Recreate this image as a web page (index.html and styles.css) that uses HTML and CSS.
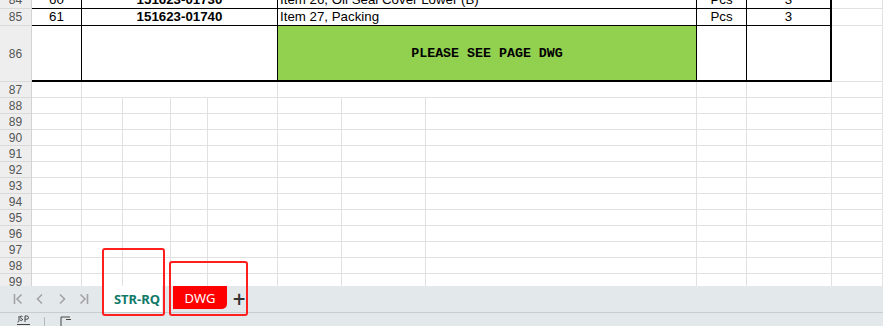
FILE: index.html
```html
<!DOCTYPE html>
<html lang="en">
<head>
    <meta charset="UTF-8">
    <title>STR-RQ</title>
    <link rel="stylesheet" href="styles.css">
</head>
<body>
    <div class="sheet" id="sheet">
        <div class="row tbl first">
            <div class="hd">84</div>
            <div class="c num">60</div>
            <div class="c code">151623-01730</div>
            <div class="c item">Item 26, Oil Seal Cover Lower (B)</div>
            <div class="c mid">Pcs</div>
            <div class="c mid edge">3</div>
            <div class="g"></div>
        </div>
        <div class="row tbl">
            <div class="hd">85</div>
            <div class="c num">61</div>
            <div class="c code">151623-01740</div>
            <div class="c item">Item 27, Packing</div>
            <div class="c mid">Pcs</div>
            <div class="c mid edge">3</div>
            <div class="g"></div>
        </div>
        <div class="row tbl tall">
            <div class="hd">86</div>
            <div class="c num"></div>
            <div class="c code"></div>
            <div class="c note">PLEASE SEE PAGE DWG</div>
            <div class="c mid"></div>
            <div class="c mid edge"></div>
            <div class="g"></div>
        </div>
        <div class="row tbl plain">
            <div class="hd">87</div>
            <div class="g"></div>
            <div class="g"></div>
            <div class="g"></div>
            <div class="g"></div>
            <div class="g"></div>
            <div class="g"></div>
        </div>
    </div>

    <div class="tabbar">
        <div class="nav">
            <span class="navbtn"><svg width="10" height="12" viewBox="0 0 10 12"><path d="M1.5 1v10M8.5 1.5L4 6l4.5 4.5"/></svg></span>
            <span class="navbtn"><svg width="10" height="12" viewBox="0 0 10 12"><path d="M7 1.5L2.5 6 7 10.5"/></svg></span>
            <span class="navbtn"><svg width="10" height="12" viewBox="0 0 10 12"><path d="M3 1.5L7.5 6 3 10.5"/></svg></span>
            <span class="navbtn"><svg width="10" height="12" viewBox="0 0 10 12"><path d="M1.5 1.5L6 6l-4.5 4.5M8.5 1v10"/></svg></span>
        </div>
        <div class="tab active">STR-RQ</div>
        <div class="tab red">DWG</div>
        <div class="add">+</div>
    </div>

    <div class="status">
        <svg class="st-ico" width="16" height="13" viewBox="0 0 16 13"><path d="M3 3v4.5q0 1.5-1.5 1.5M6.5 3.5q-1.5-1-2.5 0.2 0 1.3 1.3 1.6 1.4 0.4 1.1 1.7-1 1-2.5 0M9 9V3h1.8q1.7 0 1.7 1.6T10.8 6.2H9M1 11.5h13"/></svg>
        <span class="st-sep"></span>
        <svg class="st-ico" width="14" height="13" viewBox="0 0 14 13"><path d="M2 13V4h9M7 6.5h5"/></svg>
    </div>

    <div class="mark mark-a"></div>
    <div class="mark mark-b"></div>

    <script>
        // empty rows 88 - 99
        const sheet = document.getElementById('sheet');
        for (let r = 88; r <= 99; r++) {
            let html = '<div class="hd">' + r + '</div>';
            for (let i = 0; i < 11; i++) html += '<div class="g"></div>';
            sheet.innerHTML += '<div class="row">' + html + '</div>';
        }
    </script>
</body>
</html>
```

FILE: styles.css
```css
body { margin: 0; width: 883px; height: 326px; overflow: hidden; background: #e3e8eb; position: relative; font-family: "Liberation Sans", Arial, sans-serif; }
.sheet { height: 286px; overflow: hidden; background: #fff; }
.row { display: grid; grid-template-columns: 32px 50px 41px 48px 37px 70px 64px 84px 271px 50px 85px 1fr; height: 16px; }
.row.tbl { grid-template-columns: 32px 50px 196px 419px 50px 85px 1fr; height: 17px; }
.row.first { margin-top: -8px; }
.row.tall { height: 56px; }
.row.plain { height: 16px; }
.row > div { box-sizing: border-box; overflow: hidden; white-space: nowrap; }

.hd { background: #eeeeee; border-right: 1px solid #d4d4d4; border-bottom: 1px solid #d9d9d9; color: #555; font-family: "Liberation Sans", sans-serif; font-size: 12px; line-height: 14px; text-align: center; display: flex; align-items: center; justify-content: center; }
.g { border-right: 1px solid #e1e1e1; border-bottom: 1px solid #e1e1e1; }

.c { border-right: 1px solid #000; border-bottom: 1px solid #000; font-size: 13.3px; line-height: 16px; color: #000; }
.c.num, .c.mid { text-align: center; }
.c.code { text-align: center; font-weight: bold; }
.c.item { padding-left: 2px; }
.c.edge { border-right: 2px solid #000; }
.tall .c { border-bottom: 2px solid #000; }
.c.note { background: #92d050; font-family: "Liberation Mono", monospace; font-weight: bold; font-size: 13.3px; display: flex; align-items: center; justify-content: center; padding-top: 2px; }

.tabbar { height: 26px; border-bottom: 1px solid #c8cdd1; display: flex; align-items: stretch; }
.nav { display: flex; margin-left: 7px; }
.navbtn { width: 22px; display: flex; align-items: center; justify-content: center; }
.navbtn svg { fill: none; stroke: #a3a3a3; stroke-width: 1.6; }
.tab { display: flex; align-items: center; justify-content: center; font-family: "Noto Sans", sans-serif; font-size: 13px; }
.tab.active { margin-left: 9px; width: 58px; padding-left: 8px; box-sizing: border-box; background: #fff; color: #137a6a; font-weight: bold; }
.tab.red { margin-left: 11px; width: 54px; height: 23px; background: #ff0000; color: #fff; border-bottom-right-radius: 5px; }
.add { margin-left: 6px; width: 12px; display: flex; align-items: center; justify-content: center; font-family: "DejaVu Sans", sans-serif; font-size: 17px; font-weight: bold; color: #333; }

.status { height: 13px; display: flex; align-items: flex-start; padding-left: 16px; }
.st-ico { fill: none; stroke: #444; stroke-width: 1; }
.st-sep { width: 1px; height: 10px; margin: 4px 14px 0 12px; background: #b5b9bc; }

.mark { position: absolute; border: 2.5px solid #ff1f1f; border-radius: 3px; box-sizing: border-box; }
.mark-a { left: 102px; top: 248px; width: 63px; height: 68px; }
.mark-b { left: 169px; top: 261px; width: 79px; height: 55px; }
```
